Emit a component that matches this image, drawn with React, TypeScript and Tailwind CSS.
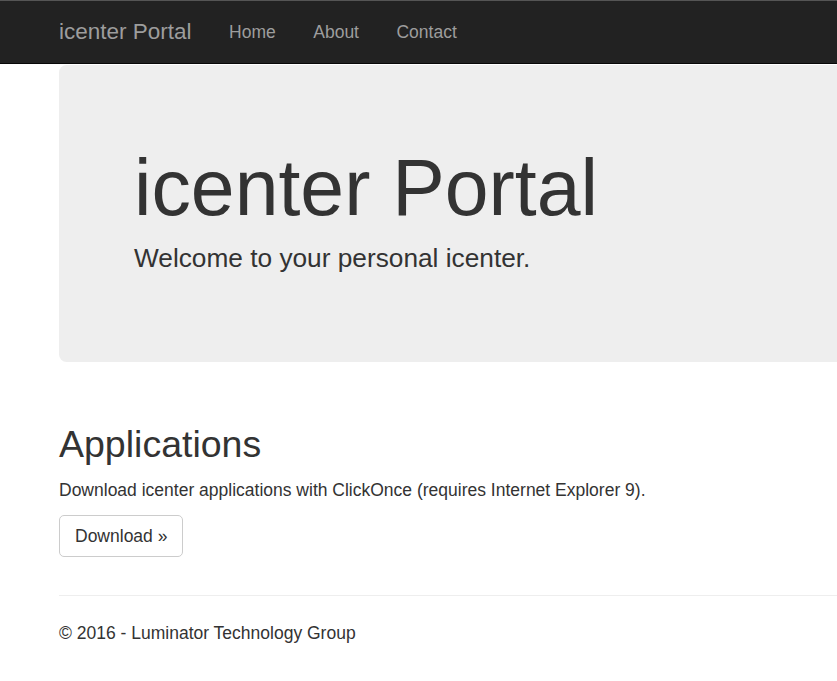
import React from 'react';

const links = ['Home', 'About', 'Contact'];

export default function App() {
  return (
    <div className="min-h-screen overflow-hidden bg-white text-[#333] font-['Liberation_Sans',Arial,sans-serif]">
      <nav className="h-[64px] border-t border-t-[#555] border-b border-b-[#080808] bg-[#222] flex items-center pl-[59px]">
        <a className="text-[22.5px] leading-[28px] text-[#9d9d9d] mr-[37.5px] mt-[-1px]">icenter Portal</a>
        <ul className="flex gap-[37.5px] text-[17.5px] leading-[25px] text-[#9d9d9d]">
          {links.map(l => (
            <li key={l}><a>{l}</a></li>
          ))}
        </ul>
      </nav>

      <main className="pl-[59px]">
        <div className="mt-px w-[900px] bg-[#eee] rounded-[7.5px] pl-[75px] pt-[80px] pb-[85px]">
          <h1 className="text-[78.75px] leading-[1.1]">icenter Portal</h1>
          <p className="mt-[8px] text-[26.25px] leading-[37.5px]">Welcome to your personal icenter.</p>
        </div>

        <section className="mt-[62px]">
          <h2 className="text-[37.5px] leading-[1.1]">Applications</h2>
          <p className="mt-[13px] text-[17.5px] leading-[25px]">
            Download icenter applications with ClickOnce (requires Internet Explorer 9).
          </p>
          <button className="mt-[12px] px-[15px] py-[7.5px] text-[17.5px] leading-[25px] border border-[#ccc] rounded-[5px] bg-white text-[#333]">
            Download &raquo;
          </button>
        </section>

        <hr className="mt-[38px] border-t border-[#eee]" />
        <footer className="mt-[25px] text-[17.5px] leading-[25px]">
          <p>&copy; 2016 - Luminator Technology Group</p>
        </footer>
      </main>
    </div>
  );
}
